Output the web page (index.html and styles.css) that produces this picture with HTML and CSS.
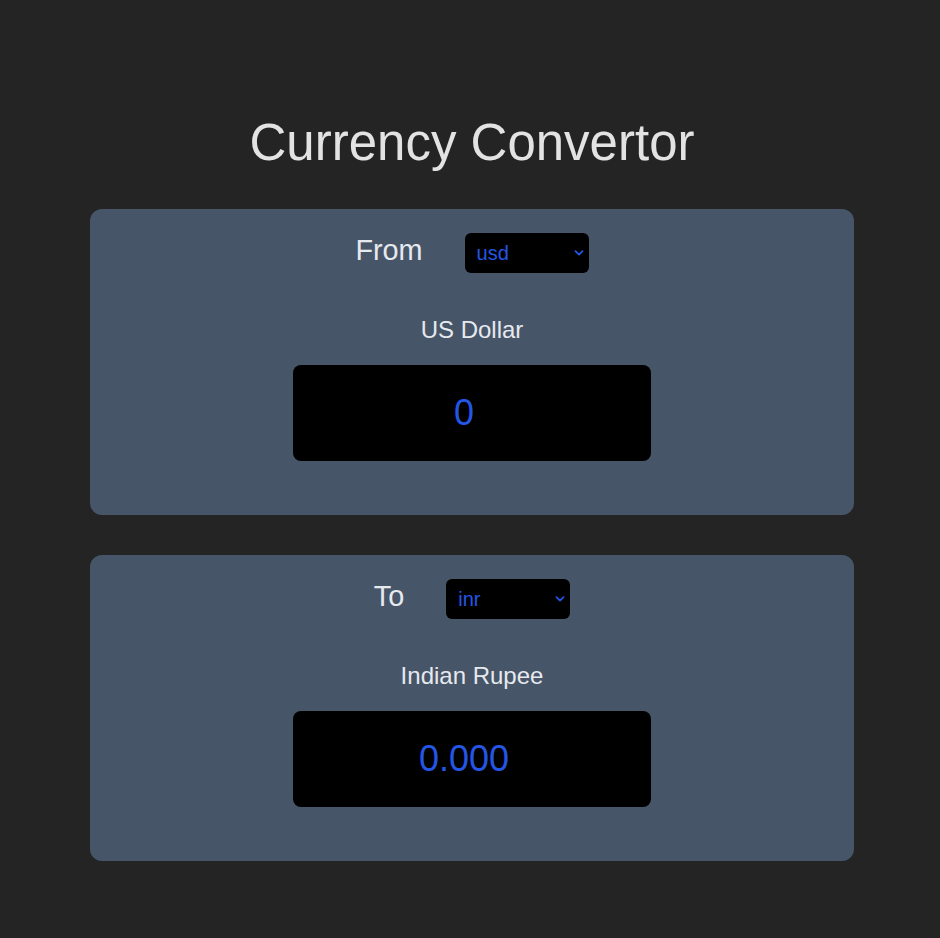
FILE: index.html
```html
<!DOCTYPE html>
<html lang="en">
<head>
<meta charset="UTF-8">
<title>Currency Convertor</title>
<link rel="stylesheet" href="styles.css">
</head>
<body>
<main class="app">
  <h1 class="title">Currency Convertor</h1>

  <section class="card">
    <div class="pick-row">
      <span class="pick-label">From</span>
      <div class="select-wrap">
        <select class="currency-select">
          <option selected>usd</option>
          <option>inr</option>
        </select>
        <svg class="chevron" viewBox="0 0 10 6" width="10" height="6" aria-hidden="true"><path d="M1.5 1.2 L5 4.6 L8.5 1.2" fill="none" stroke="currentColor" stroke-width="1.8" stroke-linecap="round" stroke-linejoin="round"/></svg>
      </div>
    </div>
    <p class="currency-name">US Dollar</p>
    <input class="amount" type="text" value="0">
  </section>

  <section class="card">
    <div class="pick-row">
      <span class="pick-label">To</span>
      <div class="select-wrap">
        <select class="currency-select">
          <option>usd</option>
          <option selected>inr</option>
        </select>
        <svg class="chevron" viewBox="0 0 10 6" width="10" height="6" aria-hidden="true"><path d="M1.5 1.2 L5 4.6 L8.5 1.2" fill="none" stroke="currentColor" stroke-width="1.8" stroke-linecap="round" stroke-linejoin="round"/></svg>
      </div>
    </div>
    <p class="currency-name">Indian Rupee</p>
    <input class="amount" type="text" value="0.000" readonly>
  </section>
</main>
</body>
</html>
```

FILE: styles.css
```css
* { box-sizing: border-box; }

html, body {
  margin: 0;
  padding: 0;
  background: #242424;
  color: rgba(255, 255, 255, 0.87);
  font-family: "Liberation Sans", Arial, sans-serif;
}

.app {
  display: flex;
  flex-direction: column;
  align-items: center;
  padding: 113px 0 40px 4px;
}

.title {
  margin: 0 0 37px;
  font-size: 51px;
  font-weight: 400;
  line-height: 59px;
  color: #e3e3e3;
}

.card {
  width: 764px;
  background: #475569;
  border-radius: 12px;
  padding: 24px 0 54px;
  display: flex;
  flex-direction: column;
  align-items: center;
  margin-bottom: 40px;
}

.pick-row {
  display: flex;
  align-items: baseline;
  gap: 42px;
  height: 40px;
}

.pick-label {
  font-size: 28.8px;
  line-height: normal;
  color: #e6e9ee;
}

.select-wrap {
  position: relative;
  display: inline-block;
}

.currency-select {
  appearance: none;
  -webkit-appearance: none;
  width: 124px;
  height: 40px;
  padding: 0 0 0 12px;
  border: none;
  border-radius: 6px;
  background: #000;
  color: #2456e6;
  font-family: "Liberation Sans", Arial, sans-serif;
  font-size: 20px;
  outline: none;
}

.chevron {
  position: absolute;
  right: 5px;
  top: 17px;
  color: #2456e6;
  pointer-events: none;
}

.currency-name {
  margin: 43px 0 21px;
  font-size: 24px;
  line-height: normal;
  color: #e6e9ee;
}

.amount {
  width: 358px;
  height: 96px;
  border: none;
  border-radius: 8px;
  background: #000;
  color: #2456e6;
  font-family: "Liberation Sans", Arial, sans-serif;
  font-size: 36px;
  text-align: center;
  padding: 0 16px 0 0;
  outline: none;
}
```
